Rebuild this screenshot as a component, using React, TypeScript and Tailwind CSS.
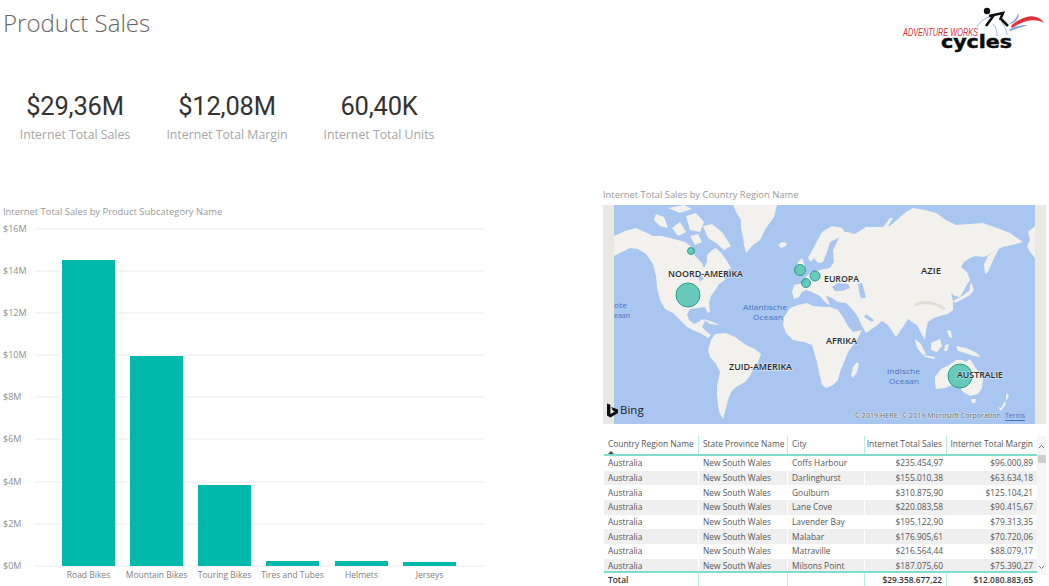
import React from "react";

const segoe = { fontFamily: "'Open Sans', 'Noto Sans', sans-serif" };

const kpis = [
  { value: "$29,36M", label: "Internet Total Sales" },
  { value: "$12,08M", label: "Internet Total Margin" },
  { value: "60,40K", label: "Internet Total Units" },
];

const bars = [
  { name: "Road Bikes", x: 62, top: 260 },
  { name: "Mountain Bikes", x: 130, top: 356 },
  { name: "Touring Bikes", x: 198, top: 485 },
  { name: "Tires and Tubes", x: 266, top: 561 },
  { name: "Helmets", x: 335, top: 561 },
  { name: "Jerseys", x: 403, top: 562 },
];

const ticks = [
  { label: "$16M", y: 229 },
  { label: "$14M", y: 271 },
  { label: "$12M", y: 313 },
  { label: "$10M", y: 355 },
  { label: "$8M", y: 397 },
  { label: "$6M", y: 439 },
  { label: "$4M", y: 482 },
  { label: "$2M", y: 524 },
  { label: "$0M", y: 566 },
];

const rows = [
  ["Coffs Harbour", "$235.454,97", "$96.000,89"],
  ["Darlinghurst", "$155.010,38", "$63.634,18"],
  ["Goulburn", "$310.875,90", "$125.104,21"],
  ["Lane Cove", "$220.083,58", "$90.415,67"],
  ["Lavender Bay", "$195.122,90", "$79.313,35"],
  ["Malabar", "$176.905,61", "$70.720,06"],
  ["Matraville", "$216.564,44", "$88.079,17"],
  ["Milsons Point", "$187.075,60", "$75.390,27"],
];

const continents = [
  // north america
  "M614 236 L625 231 L636 228 L645 232 L653 236 L662 236 L670 238 L678 240 L685 242 L692 247 L695 256 L702 263 L704 268 L707 262 L707 255 L712 250 L716 248 L722 254 L727 261 L731 268 L725 272 L722 277 L726 279 L719 284 L716 289 L711 296 L709 303 L710 312 L708 313 L705 307 L698 308 L690 309 L687 314 L689 320 L694 324 L699 322 L702 319 L705 321 L702 327 L706 331 L711 335 L708 338 L702 334 L695 331 L687 327 L680 320 L673 313 L665 309 L660 300 L657 288 L656 276 L653 264 L646 254 L638 249 L630 248 L622 252 L614 256 Z",
  // greenland
  "M733 205 L777 205 L774 217 L766 228 L760 240 L752 246 L746 253 L744 245 L743 237 L741 228 L741 220 L736 212 Z",
  // south america
  "M708 350 L711 340 L715 334 L726 333 L735 337 L746 345 L755 349 L761 354 L758 362 L753 369 L750 376 L745 382 L736 387 L731 392 L728 400 L726 408 L724 415 L723 419 L719 412 L718 404 L717 395 L717 386 L720 372 L716 364 L710 357 Z",
  // africa
  "M783 325 L784 317 L790 308 L798 305 L807 303 L813 306 L824 307 L830 307 L838 310 L843 317 L848 326 L853 332 L862 330 L857 340 L848 352 L845 360 L840 372 L838 380 L833 385 L826 388 L822 385 L819 372 L817 362 L814 352 L812 345 L804 342 L793 340 L786 333 Z",
  // eurasia
  "M792 292 L794 285 L803 283 L806 277 L811 272 L820 270 L830 268 L834 262 L833 250 L838 240 L842 232 L848 232 L855 234 L866 227 L880 227 L890 226 L900 217 L906 212 L913 208 L925 210 L936 213 L946 220 L956 225 L970 224 L983 223 L997 228 L1010 233 L1023 242 L1012 245 L1003 247 L995 250 L987 256 L983 257 L975 256 L970 258 L964 262 L961 267 L967 272 L970 280 L965 288 L960 297 L955 296 L951 293 L953 301 L953 310 L948 314 L940 316 L934 318 L928 322 L926 330 L925 340 L921 333 L917 325 L912 322 L908 319 L903 327 L896 337 L892 331 L888 325 L882 321 L876 326 L866 333 L862 326 L858 317 L853 310 L846 303 L838 302 L832 298 L826 296 L830 305 L826 303 L820 296 L812 292 L806 290 L802 292 L799 297 L794 299 Z",
  // scandinavia
  "M808 258 L815 245 L822 232 L832 226 L842 228 L846 234 L838 238 L830 242 L827 252 L823 262 L818 263 L814 258 L811 262 Z",
  // australia
  "M935 377 L941 369 L949 365 L956 360 L962 360 L966 362 L970 359 L975 367 L983 379 L982 388 L978 394 L970 396 L963 392 L960 387 L952 385 L945 388 L936 389 L935 383 Z",
  // uk and ireland
  "M796 270 L798 262 L802 258 L804 264 L806 270 L803 274 L797 275 Z",
  // iceland
  "M778 245 L782 242 L787 243 L786 246 L781 248 Z",
  // madagascar
  "M857 362 L859 364 L857 372 L853 378 L851 375 L853 367 Z",
  // kamchatka
  "M995 250 L1000 247 L994 258 L988 272 L985 274 L984 264 L988 256 Z",
  // novaya zemlya
  "M884 236 L884 226 L890 218 L893 218 L888 226 L887 236 Z",
  // japan
  "M971 282 L974 290 L970 295 L963 299 L955 303 L953 301 L962 296 L969 291 Z",
  // sumatra, java
  "M915 339 L921 344 L926 354 L923 355 L917 348 Z M924 355 L935 357 L934 359 L925 357 Z",
  // borneo, sulawesi
  "M931 343 L940 339 L942 346 L937 352 L931 350 Z M945 345 L949 344 L947 351 L944 351 Z",
  // new guinea
  "M956 346 L966 348 L975 352 L981 357 L974 356 L965 353 L958 351 Z",
  // philippines
  "M947 330 L951 331 L952 338 L949 337 Z",
  // tasmania, new zealand
  "M971 399 L976 399 L975 403 L972 403 Z M1001 408 L1005 401 L1006 404 L1001 411 L998 407 Z M1007 393 L1009 396 L1006 401 L1006 396 Z",
  // arctic islands
  "M656 214 L664 217 L668 228 L660 226 L654 220 Z M668 208 L684 205 L692 209 L680 213 Z M672 228 L680 222 L686 232 L678 236 Z M686 216 L696 213 L704 222 L700 232 L690 230 Z M703 226 L712 224 L722 232 L731 246 L724 250 L716 243 L708 238 Z M690 236 L698 234 L702 242 L695 245 Z",
  // cuba, east edge
  "M703 319 L713 322 L719 325 L710 324 Z M1035 226 L1028 232 L1030 240 L1027 246 L1030 252 L1035 258 Z",
];

const water = [
  // black sea, caspian, red sea, persian gulf
  "M832 287 L838 283 L848 284 L850 288 L842 291 L835 291 Z",
  "M858 284 L862 283 L864 290 L866 298 L861 298 L859 291 Z",
  "M845 307 L858 327 L855 329 L843 311 Z",
  "M866 314 L874 320 L872 322 L864 317 Z",
  // great lakes
  "M698 277 L702 276 L704 279 L700 281 Z",
];

const mapLabels = [
  { text: "NOORD-AMERIKA", x: 668, y: 277, w: 75 },
  { text: "EUROPA", x: 824, y: 282, w: 35 },
  { text: "AZIE", x: 921, y: 274, w: 20 },
  { text: "AFRIKA", x: 826, y: 344, w: 31 },
  { text: "ZUID-AMERIKA", x: 729, y: 370, w: 63 },
  { text: "AUSTRALIE", x: 957, y: 378, w: 46 },
];

const oceanLabels = [
  { text: "Atlantische", x: 743, y: 310, w: 44 },
  { text: "Oceaan", x: 753, y: 320, w: 30 },
  { text: "Indische", x: 887, y: 374, w: 33 },
  { text: "Oceaan", x: 889, y: 384, w: 30 },
  { text: "ote", x: 614, y: 308, w: 13 },
  { text: "eaan", x: 614, y: 318, w: 16 },
];

const bubbles = [
  { x: 691, y: 251, r: 3.5 },
  { x: 800, y: 270, r: 5.5 },
  { x: 815, y: 276, r: 5 },
  { x: 806, y: 283, r: 4.5 },
  { x: 688, y: 295, r: 12 },
  { x: 960, y: 376, r: 12 },
];

const Logo = () => (
  <svg width="150" height="52" viewBox="895 3 150 52" className="block">
    <text
      x="903"
      y="36"
      fontSize="10"
      fontStyle="italic"
      fill="#d8323c"
      textLength="75"
      lengthAdjust="spacingAndGlyphs"
      style={{ fontFamily: "'Liberation Sans', sans-serif" }}
    >
      ADVENTURE WORKS
    </text>
    <text
      x="941"
      y="48"
      fontSize="18"
      fontWeight="700"
      fill="#0c0c0c"
      stroke="#0c0c0c"
      strokeWidth="0.5"
      textLength="71"
      lengthAdjust="spacingAndGlyphs"
      style={{ fontFamily: "'DejaVu Sans', sans-serif" }}
    >
      cycles
    </text>
    <path d="M977 27 C980 21 986 17 993 16" fill="none" stroke="#9db8e0" strokeWidth="1" />
    <path d="M993 24 C996 27 997 31 997 36" fill="none" stroke="#9db8e0" strokeWidth="1" />
    <path d="M1001 22 C1005 26 1007 30 1007 35" fill="none" stroke="#9db8e0" strokeWidth="1" />
    <circle cx="987" cy="11" r="3.2" fill="#111" />
    <path d="M989 16 L1003 13 L1000 20 M994 15 L986 26 M1000 18 L1008 26" fill="none" stroke="#111" strokeWidth="2.6" />
    <path d="M1011 26 C1017 20 1028 14 1036 17 C1040 18 1042 20 1044 23 C1036 18 1024 20 1012 28 Z" fill="#e0303a" />
    <path d="M1010 23 C1014 21 1017 18 1018 13 C1020 18 1016 22 1010 24 Z" fill="#7fa3d8" />
    <path d="M1009 30 C1015 26 1022 25 1028 25 C1022 27 1015 29 1010 31 Z" fill="#7fa3d8" />
  </svg>
);

const WorldMap = () => (
  <svg width="443" height="219" viewBox="603 205 443 219" className="block">
    <defs>
      <filter id="soft" x="-5%" y="-5%" width="110%" height="110%">
        <feGaussianBlur stdDeviation="0.5" />
      </filter>
    </defs>
    <rect x="603" y="205" width="443" height="219" fill="#a9c6f0" />
    <g filter="url(#soft)">
      {continents.map((d, i) => (
        <path key={i} d={d} fill="#f2f1ed" />
      ))}
      {water.map((d, i) => (
        <path key={i} d={d} fill="#a9c6f0" />
      ))}
      <path d="M915 305 C925 300 935 303 945 309" fill="none" stroke="#dfddd6" strokeWidth="3" />
    </g>
    <rect x="603" y="205" width="11" height="219" fill="#e9e8e3" />
    <rect x="1035" y="205" width="11" height="219" fill="#e9e8e3" />
    {oceanLabels.map((l) => (
      <text
        key={l.text + l.y}
        x={l.x}
        y={l.y}
        fontSize="8"
        fill="#4a72c4"
        textLength={l.w}
        lengthAdjust="spacingAndGlyphs"
        style={segoe}
      >
        {l.text}
      </text>
    ))}
    {bubbles.map((b) => (
      <circle key={b.x} cx={b.x} cy={b.y} r={b.r} fill="#32bba6" fillOpacity="0.72" stroke="#2a9e8c" strokeWidth="1" />
    ))}
    {mapLabels.map((l) => (
      <text
        key={l.text}
        x={l.x}
        y={l.y}
        fontSize="9"
        fontWeight="600"
        fill="#2b2b2b"
        stroke="#ffffff"
        strokeOpacity="0.45"
        strokeWidth="1.5"
        paintOrder="stroke"
        textLength={l.w}
        lengthAdjust="spacingAndGlyphs"
        style={segoe}
      >
        {l.text}
      </text>
    ))}
    <path d="M607 403.5 L610.4 404.7 L610.4 414 L614.9 411.4 L612.7 410.4 L611.3 407 L618 409.4 L618 412.9 L610.4 417.4 L607 415.4 Z" fill="#111" />
    <text x="620" y="414" fontSize="11.5" fill="#222" style={segoe}>
      Bing
    </text>
    <text
      x="854"
      y="418"
      fontSize="7"
      fill="#666"
      stroke="#ffffff"
      strokeOpacity="0.5"
      strokeWidth="1.2"
      paintOrder="stroke"
      textLength="147"
      lengthAdjust="spacingAndGlyphs"
      style={segoe}
    >
      © 2019 HERE, © 2019 Microsoft Corporation
    </text>
    <text x="1005" y="418" fontSize="7" fill="#4a72c4" textLength="20" lengthAdjust="spacingAndGlyphs" style={segoe}>
      Terms
    </text>
    <rect x="1005" y="420" width="20" height="1" fill="#4a72c4" />
  </svg>
);

const BarChart = () => (
  <svg width="603" height="366" viewBox="0 220 603 366" className="block">
    {ticks.map((t) => (
      <g key={t.label}>
        <text x="3" y={t.y + 3} fontSize="9" fill="#8e8e8e" style={segoe}>
          {t.label}
        </text>
        <rect x="34" y={t.y - 0.5} width="451" height="1" fill="#eeeeee" />
      </g>
    ))}
    {bars.map((b) => (
      <g key={b.name}>
        <rect x={b.x} y={b.top} width="53" height={566 - b.top} fill="#01b8aa" />
        <text x={b.x + 26.5} y="578" fontSize="8.5" fill="#808080" textAnchor="middle" style={segoe}>
          {b.name}
        </text>
      </g>
    ))}
  </svg>
);

const cols = "grid grid-cols-[95px_89px_77px_82px_90px]";

const DataTable = () => (
  <div className="flex h-[156px] whitespace-nowrap text-[8.4px] text-[#555555]" style={segoe}>
    <div className="flex w-[434px] flex-col pl-px pt-[6px]">
      <div className={`${cols} h-[20px] border-b-2 border-[#7fdccf]`}>
        <div className="relative border-r border-[#b8ece4] pl-[4px] pt-[2px]">
          Country Region Name
          <div className="absolute bottom-[0px] left-[4px] h-0 w-0 border-x-[3px] border-b-[3px] border-x-transparent border-b-[#444444]" />
        </div>
        <div className="border-r border-[#b8ece4] pl-[4px] pt-[2px]">State Province Name</div>
        <div className="border-r border-[#b8ece4] pl-[4px] pt-[2px]">City</div>
        <div className="border-r border-[#b8ece4] pr-[4px] pt-[2px] text-right">Internet Total Sales</div>
        <div className="pr-[4px] pt-[2px] text-right">Internet Total Margin</div>
      </div>
      <div className="h-[115px] overflow-hidden">
        {rows.map((r, i) => (
          <div
            key={r[0]}
            className={`${cols} h-[14.7px] items-center leading-[14px] ${i % 2 === 1 ? "bg-[#efefef]" : "bg-white"}`}
          >
            <div className="border-r border-white pl-[4px]">Australia</div>
            <div className="border-r border-white pl-[4px]">New South Wales</div>
            <div className="border-r border-white pl-[4px]">{r[0]}</div>
            <div className="pr-[4px] text-right">{r[1]}</div>
            <div className="pr-[4px] text-right">{r[2]}</div>
          </div>
        ))}
      </div>
      <div className={`${cols} h-[15px] border-t-2 border-[#7fdccf] font-semibold leading-[13px] text-[#333333]`}>
        <div className="border-r border-[#b8ece4] pl-[4px]">Total</div>
        <div className="border-r border-[#b8ece4]" />
        <div className="border-r border-[#b8ece4]" />
        <div className="border-r border-[#b8ece4] pr-[4px] text-right">$29.358.677,22</div>
        <div className="pr-[4px] text-right">$12.080.883,65</div>
      </div>
    </div>
    <div className="mt-[6px] flex h-[139px] w-[9px] flex-col items-center bg-[#f6f6f6]">
      <svg width="7" height="5" viewBox="0 0 7 5" className="mt-[8px]">
        <path d="M1 4 L3.5 1.5 L6 4" fill="none" stroke="#777" strokeWidth="1" />
      </svg>
      <div className="mt-[6px] h-[8px] w-[8px] bg-[#cccccc]" />
      <svg width="7" height="5" viewBox="0 0 7 5" className="mt-auto mb-[5px]">
        <path d="M1 1 L3.5 3.5 L6 1" fill="none" stroke="#777" strokeWidth="1" />
      </svg>
    </div>
  </div>
);

const App = () => (
  <div className="flex h-[586px] w-[1049px] flex-col overflow-hidden bg-white" style={segoe}>
    <div className="flex h-[55px] items-start justify-between pr-[4px]">
      <h1 className="pl-[3px] pt-[5px] text-[24px] leading-[36px] font-light text-[#666666]">Product Sales</h1>
      <div className="pt-[3px]">
        <Logo />
      </div>
    </div>
    <div className="-ml-px flex h-[130px] items-start">
      {kpis.map((k) => (
        <div key={k.label} className="flex w-[152px] flex-col items-center pt-[34px]">
          <div
            className="text-[25.5px] leading-[34px] tracking-[-0.2px] text-[#333333]"
            style={{ fontFamily: "Roboto, sans-serif" }}
          >
            {k.value}
          </div>
          <div className="mt-[3px] text-[12.3px] leading-[18px] text-[#a6a6a6]">{k.label}</div>
        </div>
      ))}
    </div>
    <div className="flex h-[401px]">
      <div className="w-[603px] pt-[21px]">
        <div className="h-[14px] pl-[3px] text-[9.4px] leading-[12px] text-[#999999]">
          Internet Total Sales by Product Subcategory Name
        </div>
        <BarChart />
      </div>
      <div className="w-[446px]">
        <div className="h-[20px] pt-[4px] text-[9.4px] leading-[12px] text-[#999999]">
          Internet Total Sales by Country Region Name
        </div>
        <WorldMap />
        <div className="h-[6px]" />
        <DataTable />
      </div>
    </div>
  </div>
);

export default App;
